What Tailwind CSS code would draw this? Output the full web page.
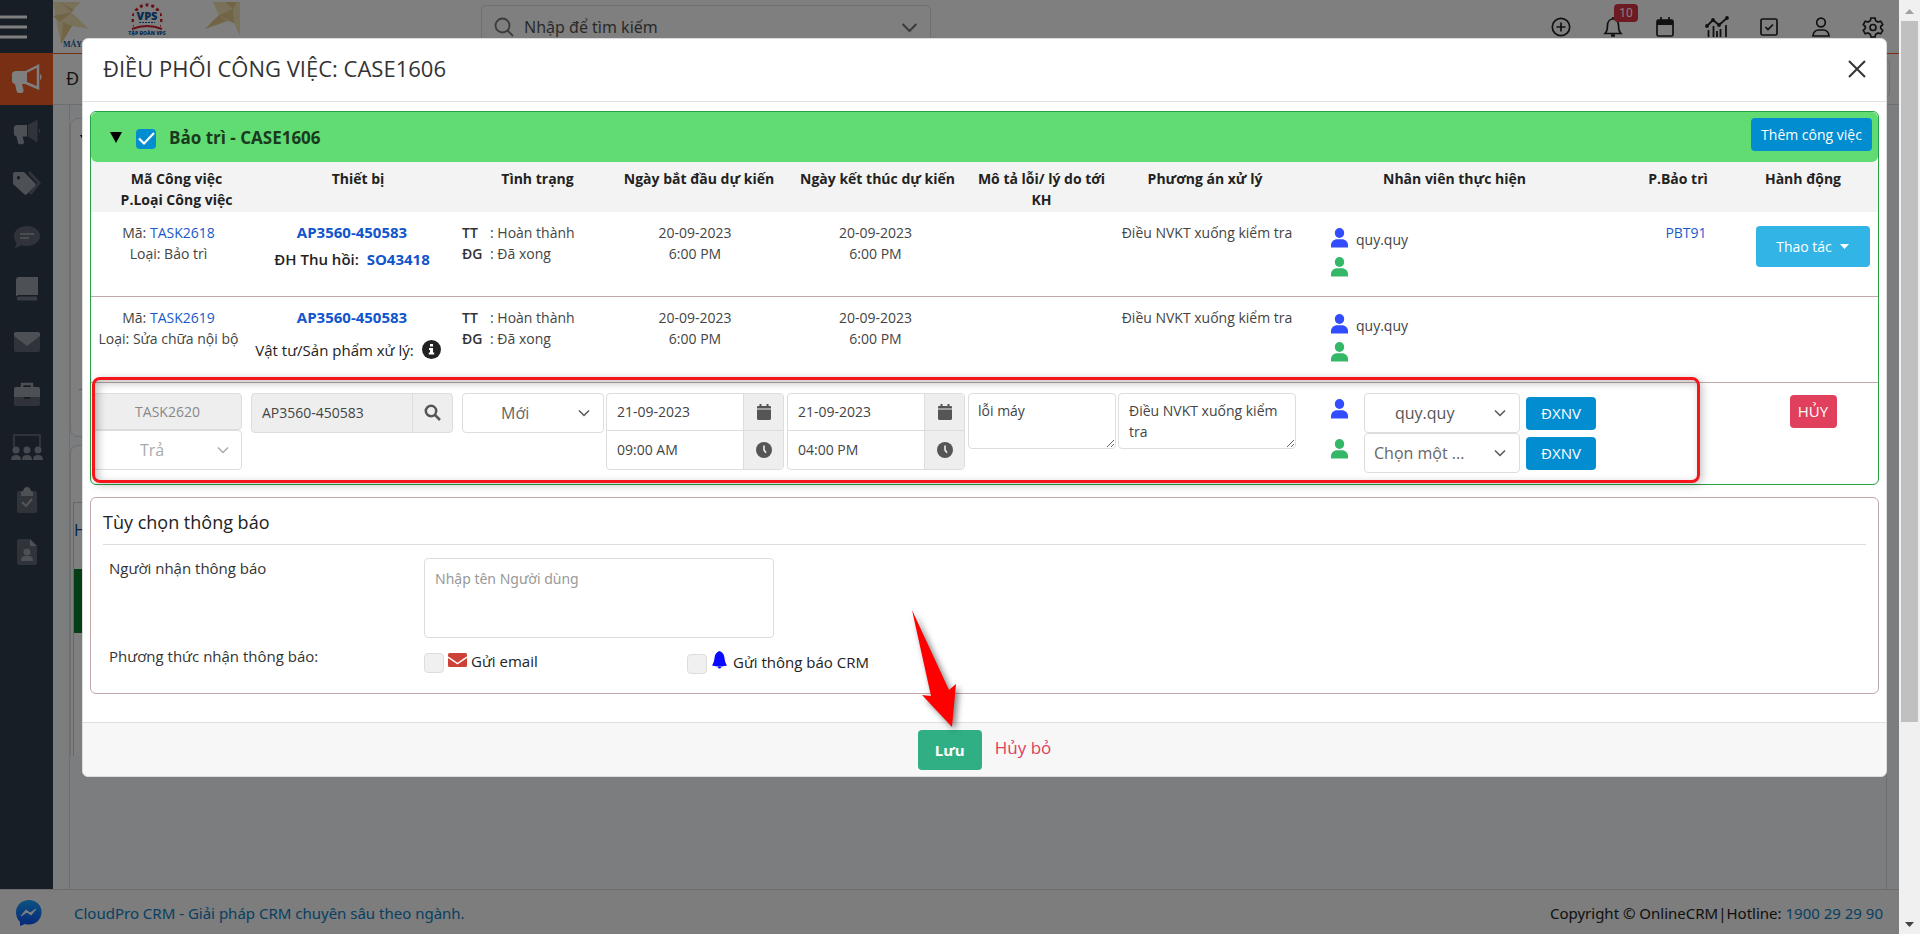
<!DOCTYPE html>
<html lang="vi">
<head>
<meta charset="utf-8">
<title>Điều phối công việc</title>
<script src="https://cdn.jsdelivr.net/npm/@tailwindcss/browser@4"></script>
</head>
<body class="h-screen overflow-hidden font-['Open_Sans','Noto_Sans',sans-serif] text-sm leading-[21px] text-[#222]">
<svg class="hidden">
  <symbol id="person" viewBox="0 0 17 20"><ellipse cx="8.5" cy="5" rx="4.7" ry="5"/><path d="M0 19.5V17c0-3.5 3-5.8 6-5.8h5c3 0 6 2.300 6 5.800v2.500z"/></symbol>
  <symbol id="chev" viewBox="0 0 12 8"><path d="M1 1.500l5 5 5-5" fill="none" stroke="currentColor" stroke-width="1.500"/></symbol>
  <symbol id="cal" viewBox="0 0 14 16"><path d="M2.500 0h2v2h5V0h2v2h1.300c.7 0 1.200.5 1.200 1.200V4.500H0V3.200C0 2.500.5 2 1.200 2h1.300zM0 5.500h14v9c0 .8-.7 1.500-1.500 1.500h-11C.7 16 0 15.300 0 14.500z"/></symbol>
  <symbol id="clock" viewBox="0 0 16 16"><circle cx="8" cy="8" r="8"/><path d="M8 3.500V8l2 2.800" fill="none" stroke="#eee" stroke-width="1.600"/></symbol>
  <symbol id="horn" viewBox="0 0 32 32"><path d="M5 8h11v13H11l1.500 6c.3 1.500-.5 3-2 3H8c-1.200 0-2-.7-2.300-1.800L4 21c-1.500 0-3-1.500-3-3v-7c0-1.600 1.600-3 4-3z"/></symbol>
</svg>
<div class="flex h-full">
  <div class="relative flex h-full min-w-0 flex-1 flex-col bg-[#f8fafe]">
    <!-- Page behind the dialog -->
    <header class="flex h-[53px] shrink-0 bg-white">
      <button aria-label="Menu" class="flex w-[53px] items-center bg-[#303c4a]"><svg width="28" height="24" fill="none" stroke="#fff" stroke-width="3"><path d="M0 2h27M0 12h27M0 22h27"/></svg></button>
      <div class="w-[190px] overflow-hidden">
        <svg width="190" height="53" viewBox="0 0 190 53">
          <g fill="#f2e3b5"><path d="M0 2h28l-10 10 18 17-17-3-11 18L4 24z"/><path d="M160 2h27v34l-6-13-7-2-22 8 14-14z"/></g>
          <g fill="#e3cb8c"><path d="M0 16l19-4-12 10zM7 2l12 10 2-2zM8 44l2-22 9 4z"/><path d="M166 15l14-6 1 14zM172 2l8 7 4-7zM152 29l22-8-8-6z"/></g>
          <circle cx="94" cy="19" r="14" fill="none" stroke="#d31f2f" stroke-width="3" stroke-dasharray="3 3" pathLength="90"/>
          <rect x="81" y="11" width="26" height="24" fill="#fff"/>
          <text x="94" y="20" text-anchor="middle" font-size="11" font-weight="800" fill="#1258a0">VPS</text>
          <path d="M86 22.500h16" stroke="#1258a0" stroke-dasharray="2 1"/>
          <path d="M79 29q15-6 30 0" fill="none" stroke="#d31f2f" stroke-width="2"/>
          <text x="94" y="35" text-anchor="middle" font-size="5" font-weight="800" fill="#1258a0">TẬP ĐOÀN VPS</text>
          <text x="10" y="47" font-size="8" font-weight="800" font-family="Liberation Serif" fill="#1258a0">MÁY</text>
        </svg>
      </div>
      <div class="ml-[238px] mt-[5px] flex h-11 w-[450px] items-center gap-[10px] rounded border border-[#e0e0e0] px-3 text-base text-[#555]">
        <svg width="20" height="20" fill="none" stroke="#777" stroke-width="1.800"><circle cx="8.500" cy="8.500" r="7"/><path d="M13.500 13.500l5.500 5.500"/></svg>
        <input aria-label="Tìm kiếm" placeholder="Nhập để tìm kiếm" class="min-w-0 flex-1 bg-transparent font-['Noto_Sans'] placeholder:text-[#555]">
        <svg class="text-[#777]" width="17" height="11"><use href="#chev"/></svg>
      </div>
      <nav class="ml-auto flex h-[54px] items-center gap-7 pr-[14px] text-[#222]" >
        <svg width="24" height="24" fill="none" stroke="currentColor" stroke-width="1.700"><circle cx="12" cy="12" r="8.700"/><path d="M12 7.500v9M7.500 12h9"/></svg>
        <div class="relative"><svg width="24" height="24" fill="none" stroke="currentColor" stroke-width="1.700"><path d="M4 18.500c1.500-1.500 2.500-3 2.500-8C6.500 6.500 9 4 12 4s5.500 2.500 5.500 6.500c0 5 1 6.500 2.500 8zM12 2v2"/><path d="M10 20.500h4" stroke-width="2.500"/></svg><span class="absolute -top-[11px] left-[13px] flex h-[18px] w-6 items-center justify-center rounded bg-[#dc3545] font-[Roboto] text-xs text-white">10</span></div>
        <svg width="24" height="24" fill="none" stroke="currentColor" stroke-width="1.700"><rect x="4" y="5" width="16" height="16" rx="1.500"/><path d="M4 7.500h16" stroke-width="5"/><path d="M8 2v4M16 2v4"/></svg>
        <svg width="24" height="24" fill="none" stroke="currentColor" stroke-width="1.800"><path d="M2 11l6-6 6 5 8-7M3.500 15v7M8.500 11v11M15.500 14v8M21 10v12M12 16v6"/><circle cx="2" cy="11" r="1"/><circle cx="8" cy="5" r="1"/><circle cx="14" cy="10" r="1"/><circle cx="22" cy="3" r="1"/></svg>
        <svg width="24" height="24" fill="none" stroke="currentColor" stroke-width="1.700"><rect x="4" y="4" width="16" height="16" rx="1.500"/><path d="M8.500 12l2.500 2.500 5-5"/></svg>
        <svg width="24" height="24" fill="none" stroke="currentColor" stroke-width="1.700"><circle cx="12" cy="7.500" r="4.300"/><path d="M4 21c0-4 3-6 5.500-6h5c2.500 0 5.500 2 5.500 6z"/></svg>
        <svg width="24" height="24" fill="none" stroke="currentColor" stroke-width="1.700"><path d="M10 3h4l.7 2.700 2.300 1.300 2.700-.8 2 3.500-2 1.800v1.900l2 1.900-2 3.500-2.700-.8-2.300 1.300L14 22h-4l-.7-2.700L7 18l-2.700.8-2-3.500 2-1.900v-1.900l-2-1.800 2-3.500L7 7l2.300-1.300z"/><circle cx="12" cy="12.500" r="3"/></svg>
      </nav>
    </header>
    <div class="flex min-h-0 flex-1">
      <aside class="flex w-[53px] shrink-0 flex-col items-center bg-[#303c4a] text-[#9aa0a8]">
        <div class="flex h-[52px] w-full items-center justify-center bg-[#f35e28] text-white"><svg width="32" height="32" fill="currentColor"><use href="#horn"/><path d="M15 9l12-6v22l-12-5" fill="none" stroke="currentColor" stroke-width="2.500"/><path d="M29 11c2 1 2 5 0 6z"/></svg></div>
        <div class="flex h-[53px] items-center"><svg width="28" height="28" viewBox="0 0 32 32" fill="currentColor"><use href="#horn"/><path d="M17 8L28 2v26l-11-7zM29.500 12c2.500 1 2.500 4.500 0 5.500z" fill="#606875"/></svg></div>
        <div class="flex h-[52px] items-center"><svg width="30" height="26" viewBox="0 0 30 26" fill="currentColor"><path d="M17 1l10 11-9 11" fill="none" stroke="#606875" stroke-width="3"/><path fill-rule="evenodd" d="M1 3c0-1 1-2 2-2h9l11 11c1 1 1 2 0 3l-8 8c-1 1-2 1-3 0L1 13zM6.500 5a1.700 1.700 0 100 3.400 1.700 1.700 0 000-3.400z"/></svg></div>
        <div class="flex h-[53px] items-center"><svg width="28" height="24"><path d="M14 1c7 0 13 4 13 10s-6 10-13 10c-2 0-4-.3-6-1-2 2-5 3-7 3 1-1 2.500-3 2.500-5C2 16 1 14 1 11 1 5 7 1 14 1z" fill="#606875"/><path d="M7 9h14M7 13h9" stroke="#a5abb2" stroke-width="1.600"/></svg></div>
        <div class="flex h-[52px] items-center"><svg width="24" height="26" fill="currentColor"><path d="M4 1h19v18H4c-2 0-3 1-3 2V4c0-2 1-3 3-3z"/><path d="M4 20.500h18v4H4c-3 0-3-4 0-4z" fill="#737b86"/></svg></div>
        <div class="flex h-[53px] items-center"><svg width="26" height="20" fill="#606875"><rect width="26" height="20" rx="2"/><path d="M0 2c0-1 1-2 2-2h22c1 0 2 1 2 2v2l-13 10L0 4z" fill="#9aa0a8"/></svg></div>
        <div class="flex h-[52px] items-center"><svg width="26" height="24" fill="currentColor"><path d="M8 5V2h10v3" fill="none" stroke="currentColor" stroke-width="2.500"/><path d="M2 5h22q2 0 2 2v8H0V7q0-2 2-2z"/><path d="M0 15h10v2h6v-2h10v7q0 2-2 2H2q-2 0-2-2z" fill="#606875"/></svg></div>
        <div class="flex h-[54px] items-center"><svg width="32" height="26" fill="#8d949d"><path d="M3 13V1h26v12" fill="none" stroke="#606875" stroke-width="2"/><circle cx="5" cy="16" r="3.500"/><circle cx="16" cy="16" r="3.500"/><circle cx="27" cy="16" r="3.500"/><path d="M0 26q0-5 5-5t5 5zM11 26q0-5 5-5t5 5zM22 26q0-5 5-5t5 5z"/></svg></div>
        <div class="flex h-[51px] items-center"><svg width="20" height="26"><rect y="4" width="20" height="22" rx="2" fill="#606875"/><path d="M4 9V5q0-1 2-1 1-4 4-4t4 4q2 0 2 1v4z" fill="#9aa0a8"/><path d="M5 15l4 4 6-7" fill="none" stroke="#aaa" stroke-width="2"/></svg></div>
        <div class="flex h-[53px] items-center"><svg width="20" height="26"><path d="M2 0h11v7h7v17q0 2-2 2H2q-2 0-2-2V2q0-2 2-2z" fill="#606875"/><g fill="#9aa0a8"><path d="M13 0l7 7h-7zM4 22q0-5 4-5h4q4 0 4 5z"/><circle cx="10" cy="13" r="3.500"/></g></svg></div>
      </aside>
      <div class="flex min-w-0 flex-1 flex-col border-t border-[#f35e28]">
        <div class="flex h-[51px] shrink-0 items-center justify-between border-b border-[#ddd] bg-white pb-[2px] pl-[13px] pr-[9px] text-lg text-[#222]"><span>Đ</span><span class="h-[38px] w-20 rounded border border-[#ddd]"></span></div>
        <div class="ml-4 mr-3 flex flex-1 flex-col border-x border-[#ddd]">
          <div class="mt-[13px] h-[319px] shrink-0 rounded-lg border border-[#ddd] bg-white pl-2 pt-2 text-[#800]"><svg width="14" height="24"><path d="M1 8h10l-5 8z"/></svg><div class="mt-[238px] border-t border-[#bbb]"></div></div>
          <div class="mt-2 flex h-[311px] shrink-0 flex-col rounded-t-lg border border-b-0 border-[#ddd] bg-white pl-[2px]">
            <div class="h-[57px] shrink-0 border-b border-[#ccc]"></div>
            <div class="flex-1 border-l border-[#ccc] text-base text-[#024a90]"><div class="flex h-[66px] items-center pb-3">H</div><div class="h-16 bg-[#0b7a2c]"></div></div>
          </div>
        </div>
      </div>
    </div>
    <footer class="flex h-[45px] shrink-0 items-center border-t border-[#d8dad8] bg-[#f8faf8] pl-4 pr-[16px] pt-[2px] font-['Noto_Sans'] text-[15px] text-[#222]">
      <svg width="26" height="26" viewBox="0 0 26 26"><defs><linearGradient id="mg" x2="0" y2="1"><stop stop-color="#1aa5ff"/><stop offset="1" stop-color="#0a50f5"/></linearGradient></defs><path d="M13 0c7 0 12.500 5 12.500 12S20 24.500 13 24.500c-1.300 0-3-.3-4-.6L4 26v-4C1.500 19.500 0 16 0 12.500 0 5 6 0 13 0z" fill="url(#mg)"/><path d="M5 16l5-6 4 3 6-4-5 6-4-3z" fill="#fff" stroke="#fff"/></svg>
      <a href="#" class="ml-8 text-[#0f80c4]">CloudPro CRM - Giải pháp CRM chuyên sâu theo ngành.</a>
      <span class="ml-auto">Copyright © OnlineCRM|Hotline: <a href="#" class="text-[#0f80c4]">1900 29 29 90</a></span>
    </footer>
    <div class="absolute inset-0 bg-black/50"></div>

    <!-- Dialog -->
    <div class="absolute inset-0 pl-[82px] pr-3 pt-[38px]">
      <div role="dialog" aria-labelledby="dlg" class="rounded-md border border-[#ddd] bg-white">
        <div class="flex h-[63px] items-center justify-between border-b border-[#e2e2e2] pb-[3px] pl-5 pr-[20px]">
          <h1 id="dlg" class="text-[22px] text-[#333]">ĐIỀU PHỐI CÔNG VIỆC: CASE1606</h1>
          <button aria-label="Đóng"><svg width="18" height="18" stroke="#333" stroke-width="2"><path d="M1 1l16 16M17 1L1 17"/></svg></button>
        </div>
        <div class="relative px-[7px] pb-7 pt-[9px]">
          <section class="rounded-md border border-[#28a045]">
            <div class="flex h-[50px] items-center rounded-md bg-[#60dc72] pl-[19px] pr-[6px]">
              <button aria-label="Thu gọn"><svg width="12" height="11"><path d="M0 0h12L6 11z"/></svg></button>
              <label class="ml-[14px] flex flex-1 items-center gap-[13px] text-[17px] font-bold text-[#1a3a1e]">
                <span class="relative mt-[3px] flex size-5"><input type="checkbox" checked class="size-5 appearance-none rounded bg-[#028dd0]"><svg class="absolute left-0 top-0" width="20" height="20"><path d="M3 9.500l5 5 10-10.500" fill="none" stroke="#fff" stroke-width="2.200"/></svg></span>Bảo trì - CASE1606</label>
              <button class="mb-[5px] h-[33px] w-[121px] rounded bg-[#028dd0] text-white">Thêm công việc</button>
            </div>
            <table class="w-full table-fixed border-collapse text-center">
              <colgroup><col class="w-[155px]"><col class="w-[212px]"><col class="w-[147px]"><col class="w-[180px]"><col class="w-[181px]"><col class="w-[151px]"><col class="w-[180px]"><col><col class="w-[132px]"><col class="w-[134px]"></colgroup>
              <thead class="bg-[#f3f3f3] align-top">
                <tr class="h-[50px]">
                  <th class="pl-4 pt-[6px] font-bold">Mã Công việc<br>P.Loại Công việc</th><th class="pl-3 pt-[6px] font-bold">Thiết bị</th><th class="pl-3 pt-[6px] font-bold">Tình trạng</th><th class="whitespace-nowrap pl-2 pt-[6px] font-bold">Ngày bắt đầu dự kiến</th><th class="whitespace-nowrap pl-1 pt-[6px] font-bold">Ngày kết thúc dự kiến</th><th class="whitespace-nowrap pt-[6px] font-bold">Mô tả lỗi/ lý do tới<br>KH</th><th class="pr-1 pt-[6px] font-bold">Phương án xử lý</th><th class="pt-[6px] font-bold">Nhân viên thực hiện</th><th class="pt-[6px] font-bold">P.Bảo trì</th><th class="pr-4 pt-[6px] font-bold">Hành động</th>
                </tr>
              </thead>
              <tbody class="align-top text-[#444]">
                <tr class="h-[84px] border-b border-[#c0a8a8]">
                  <td class="pt-[10px]">Mã: <a href="#" class="text-[#1a58cc]">TASK2618</a><br>Loại: Bảo trì</td>
                  <td class="pt-[10px] text-[15px] font-semibold text-[#222]"><a href="#" class="font-bold text-[#1155cc]">AP3560-450583</a><div class="mt-[6px]">ĐH Thu hồi:&nbsp; <a href="#" class="font-bold text-[#1155cc]">SO43418</a></div></td>
                  <td class="pl-1 pt-[10px] text-left"><div class="grid grid-cols-[28px_1fr]"><b class="font-semibold text-[#333]">TT</b><span>: Hoàn thành</span><b class="font-semibold text-[#333]">ĐG</b><span>: Đã xong</span></div></td>
                  <td class="pt-[10px]">20-09-2023<br>6:00 PM</td><td class="pt-[10px]">20-09-2023<br>6:00 PM</td><td></td>
                  <td class="whitespace-nowrap pt-[10px]">Điều NVKT xuống kiểm tra</td>
                  <td class="pl-[34px] pt-4 text-left"><div class="flex gap-2"><svg width="17" height="20" fill="#324dff"><use href="#person"/></svg><span class="mt-px">quy.quy</span></div><svg class="mt-[7px]" width="17" height="20" fill="#34b868"><use href="#person"/></svg></td>
                  <td class="pl-4 pt-[10px]"><a href="#" class="text-[#1a58cc]">PBT91</a></td>
                  <td class="pl-[3px] pt-[14px]"><button class="inline-flex h-[41px] w-[114px] items-center justify-center gap-2 rounded bg-[#33b4e6] text-white">Thao tác <svg width="9" height="5" fill="#fff"><path d="M0 0h9L4.500 5z"/></svg></button></td>
                </tr>
                <tr class="h-[86px] border-b border-[#c0a8a8]">
                  <td class="pt-[10px]">Mã: <a href="#" class="text-[#1a58cc]">TASK2619</a><br><span class="whitespace-nowrap">Loại: Sửa chữa nội bộ</span></td>
                  <td class="pt-[10px] text-[15px] text-[#222]"><a href="#" class="font-bold text-[#1155cc]">AP3560-450583</a><div class="mt-3 flex justify-center gap-2 whitespace-nowrap pr-2 font-medium">Vật tư/Sản phẩm xử lý: <svg class="shrink-0" width="19" height="19"><circle cx="9.500" cy="9.500" r="9.500" fill="#222"/><path d="M8 4h3v2.500H8zM7 8h4v4.500h1.200v2H6.800v-2H8V10H7z" fill="#fff"/></svg></div></td>
                  <td class="pl-1 pt-[10px] text-left"><div class="grid grid-cols-[28px_1fr]"><b class="font-semibold text-[#333]">TT</b><span>: Hoàn thành</span><b class="font-semibold text-[#333]">ĐG</b><span>: Đã xong</span></div></td>
                  <td class="pt-[10px]">20-09-2023<br>6:00 PM</td><td class="pt-[10px]">20-09-2023<br>6:00 PM</td><td></td>
                  <td class="whitespace-nowrap pt-[10px]">Điều NVKT xuống kiểm tra</td>
                  <td class="pl-[34px] pt-[17px] text-left"><div class="flex gap-2"><svg width="17" height="20" fill="#324dff"><use href="#person"/></svg><span class="mt-px">quy.quy</span></div><svg class="mt-[6px]" width="17" height="20" fill="#34b868"><use href="#person"/></svg></td>
                  <td></td><td></td>
                </tr>
                <tr class="h-[102px]">
                  <td class="pl-[2px] pr-1 pt-[10px]"><input aria-label="Mã công việc" disabled value="TASK2620" class="block h-[37px] w-full rounded border border-[#ddd] bg-[#eee] text-center text-[#888]">
                    <div class="relative"><select aria-label="Loại" class="block h-10 w-full appearance-none rounded border border-[#ddd] bg-white pl-[46px] text-base text-[#aaa]"><option>Trả</option></select><svg class="absolute right-[13px] top-4 text-[#aaa]" width="12" height="8"><use href="#chev"/></svg></div></td>
                  <td class="px-[5px] pt-[10px]"><div class="flex h-10 rounded border border-[#ddd] bg-[#eee]"><input aria-label="Thiết bị" value="AP3560-450583" class="min-w-0 flex-1 pl-[10px]"><button aria-label="Tìm" class="flex w-10 items-center justify-center border-l border-[#ddd]"><svg width="17" height="17" fill="none" stroke="#555" stroke-width="2.500"><circle cx="7" cy="7" r="5.200"/><path d="M10.500 10.500l5.500 5.500"/></svg></button></div></td>
                  <td class="pl-1 pr-[1px] pt-[10px]"><div class="relative"><select aria-label="Tình trạng" class="block h-10 w-full appearance-none rounded border border-[#ddd] bg-white pl-[38px] text-base text-[#666]"><option>Mới</option></select><svg class="absolute right-[14px] top-4 text-[#555]" width="12" height="8"><use href="#chev"/></svg></div></td>
                  <td class="pl-[1px] pr-[1px] pt-[10px]">
                    <div class="flex h-[38px] overflow-hidden rounded-t border border-[#ddd]"><input aria-label="Ngày bắt đầu" value="21-09-2023" class="min-w-0 flex-1 pl-[10px]"><span class="flex w-10 items-center justify-center border-l border-[#ddd] bg-[#eee]"><svg width="14" height="16" fill="#555"><use href="#cal"/></svg></span></div>
                    <div class="-mt-px flex h-10 overflow-hidden rounded-b border border-[#ddd]"><input aria-label="Giờ bắt đầu" value="09:00 AM" class="min-w-0 flex-1 pl-[10px]"><span class="flex w-10 items-center justify-center border-l border-[#ddd] bg-[#eee]"><svg width="16" height="16" fill="#555"><use href="#clock"/></svg></span></div></td>
                  <td class="pl-[2px] pr-[1px] pt-[10px]">
                    <div class="flex h-[38px] overflow-hidden rounded-t border border-[#ddd]"><input aria-label="Ngày kết thúc" value="21-09-2023" class="min-w-0 flex-1 pl-[10px]"><span class="flex w-10 items-center justify-center border-l border-[#ddd] bg-[#eee]"><svg width="14" height="16" fill="#555"><use href="#cal"/></svg></span></div>
                    <div class="-mt-px flex h-10 overflow-hidden rounded-b border border-[#ddd]"><input aria-label="Giờ kết thúc" value="04:00 PM" class="min-w-0 flex-1 pl-[10px]"><span class="flex w-10 items-center justify-center border-l border-[#ddd] bg-[#eee]"><svg width="16" height="16" fill="#555"><use href="#clock"/></svg></span></div></td>
                  <td class="pl-[2px] pr-[1px] pt-[10px]"><textarea aria-label="Mô tả lỗi" class="block h-14 w-full resize overflow-hidden rounded border border-[#ddd] px-[9px] pt-[6px]">lỗi máy</textarea></td>
                  <td class="pl-[1px] pr-[1px] pt-[10px]"><textarea aria-label="Phương án xử lý" class="block h-14 w-full resize overflow-hidden rounded border border-[#ddd] pl-[10px] pr-1 pt-[6px]">Điều NVKT xuống kiểm tra</textarea></td>
                  <td class="pl-[34px] pt-[10px] text-left">
                    <div class="flex"><svg class="mr-4 mt-[6px] shrink-0" width="17" height="20" fill="#324dff"><use href="#person"/></svg><div class="relative w-[156px]"><select aria-label="Nhân viên chính" class="block h-10 w-full appearance-none rounded border border-[#ddd] bg-white pl-[30px] text-base text-[#555]"><option>quy.quy</option></select><svg class="absolute right-[14px] top-4 text-[#555]" width="12" height="8"><use href="#chev"/></svg></div><button class="ml-[6px] mt-1 h-[33px] w-[70px] rounded bg-[#028dd0] text-[15px] text-white">ĐXNV</button></div>
                    <div class="flex"><svg class="mr-4 mt-[6px] shrink-0" width="17" height="20" fill="#34b868"><use href="#person"/></svg><div class="relative w-[156px]"><select aria-label="Nhân viên phụ" class="block h-10 w-full appearance-none rounded border border-[#ddd] bg-white pl-[9px] text-base text-[#666]"><option>Chọn một ...</option></select><svg class="absolute right-[14px] top-4 text-[#555]" width="12" height="8"><use href="#chev"/></svg></div><button class="ml-[6px] mt-1 h-[33px] w-[70px] rounded bg-[#028dd0] text-[15px] text-white">ĐXNV</button></div></td>
                  <td></td>
                  <td class="pl-[4px] pt-3"><button class="h-[33px] w-[47px] rounded bg-[#e0405c] text-[15px] text-white">HỦY</button></td>
                </tr>
              </tbody>
            </table>
          </section>
          <!-- Callout around the row being edited -->
          <div class="pointer-events-none absolute left-[9px] right-[186px] top-[275px] h-[106px] rounded-lg border-[3px] border-[#f5151a] shadow-[2px_2px_8px_rgba(0,0,0,0.25),inset_3px_3px_8px_rgba(0,0,0,0.25)]"></div>

          <section class="mt-3 rounded-md border border-[#c0a8a8] px-3 pb-[19px]">
            <h2 class="border-b border-[#ddd] pb-[10px] pt-3 text-[18px] font-medium leading-6">Tùy chọn thông báo</h2>
            <div class="mt-[13px] flex pl-[6px] text-[#333]">
              <label for="rcv" class="w-[315px] text-[15px] font-medium">Người nhận thông báo</label>
              <textarea id="rcv" placeholder="Nhập tên Người dùng" class="h-[80px] w-[350px] resize-none rounded border border-[#ddd] px-[10px] pt-[9px] font-['Noto_Sans'] placeholder:text-[#999]"></textarea>
            </div>
            <div class="mt-2 flex pl-[6px] text-[15px] font-medium">
              <span class="w-[315px] text-[#333]">Phương thức nhận thông báo:</span>
              <label class="flex w-[263px] gap-1 pt-[5px]"><input type="checkbox" class="mt-[2px] size-5 appearance-none rounded border border-[#ddd] bg-[#f0f0f0]"><svg class="mt-[2px]" width="19" height="14"><rect width="19" height="14" rx="1.500" fill="#cc4236"/><path d="M0 4l9.500 6.500L19 4" fill="none" stroke="#fff" stroke-width="1.500"/></svg>Gửi email</label>
              <label class="flex pt-[6px]"><input type="checkbox" class="mt-[2px] size-5 appearance-none rounded border border-[#ddd] bg-[#f0f0f0]"><svg class="ml-[5px] mr-[6px] -mt-px" width="15" height="18" fill="#0a0aff"><path d="M7.500 0c3 1 4.500 3 5 7 .3 3 1 5 2.500 7.500-5 1.500-10 1.500-15 0C1.500 12 2.200 10 2.500 7c.5-4 2-6 5-7zM5.500 16h4q-2 3-4 0z"/></svg>Gửi thông báo CRM</label>
            </div>
          </section>
          <!-- Callout arrow to the save button -->
          <svg class="pointer-events-none absolute bottom-[-10px] left-[calc(50%_-_74px)] drop-shadow-[3px_3px_3px_rgba(0,0,0,0.5)]" width="48" height="122"><path d="M1 0L38 80l7-6-4 43L11 85l9 1z" fill="#f00"/></svg>
        </div>
        <div class="flex h-[54px] items-start justify-center gap-[13px] rounded-b-md border-t border-[#e0e0e0] bg-[#f7f7f7] pt-[7px]">
          <button class="h-10 w-16 rounded bg-[#30ae84] text-[15px] font-bold text-white">Lưu</button>
          <a href="#" class="mt-[7px] text-[17px] text-[#e0405c]">Hủy bỏ</a>
        </div>
      </div>
    </div>
  </div>
  <!-- Vertical scroll track -->
  <div class="flex w-[21px] shrink-0 flex-col items-center bg-[#f0f0f0]">
    <svg class="h-[21px] w-[9px] shrink-0" viewBox="0 0 9 21" fill="#a0a0a0"><path d="M0 14l4.500-5L9 14z"/></svg>
    <div class="h-[75%] w-[17px] bg-[#c0c0c0]"></div>
    <svg class="mt-auto h-[21px] w-[9px] shrink-0" viewBox="0 0 9 21" fill="#444"><path d="M0 9h9l-4.500 5z"/></svg>
  </div>
</div>
</body>
</html>
